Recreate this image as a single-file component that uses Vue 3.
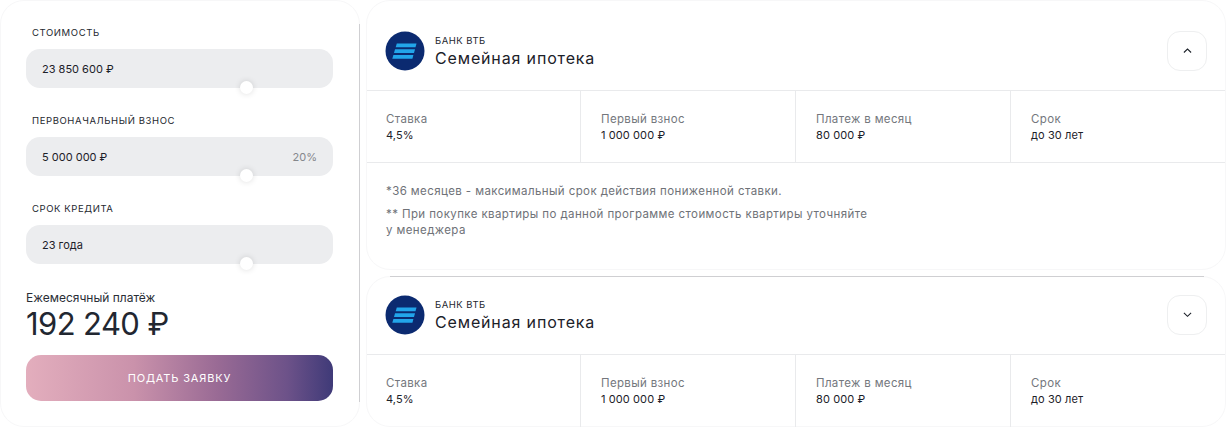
<script setup>
const fields = [
  { label: 'Стоимость', value: '23 850 600 ₽', extra: '' },
  { label: 'Первоначальный взнос', value: '5 000 000 ₽', extra: '20%' },
  { label: 'Срок кредита', value: '23 года', extra: '' },
]
const stats = [
  { label: 'Ставка', value: '4,5%' },
  { label: 'Первый взнос', value: '1 000 000 ₽' },
  { label: 'Платеж в месяц', value: '80 000 ₽' },
  { label: 'Срок', value: 'до 30 лет' },
]
const cards = [
  { open: true },
  { open: false },
]
</script>

<template>
  <div class="page">
    <aside class="panel">
      <div v-for="f in fields" :key="f.label" class="field">
        <div class="field-label">{{ f.label }}</div>
        <div class="input">
          <span class="input-value">{{ f.value }}</span>
          <span v-if="f.extra" class="input-extra">{{ f.extra }}</span>
          <span class="thumb"></span>
        </div>
      </div>
      <div class="total-label">Ежемесячный платёж</div>
      <div class="total">192 240 ₽</div>
      <button class="submit">Подать заявку</button>
    </aside>
    <main class="list">
      <section v-for="(c, i) in cards" :key="i" class="card" :class="i > 0 ? 'card-next' : 'card-first'">
        <header class="head">
          <svg class="logo" viewBox="0 0 40 40" width="40" height="40">
            <circle cx="20" cy="20" r="19.5" fill="#0b2a70" />
            <path d="M11.8 12.4H31.5L30.5 16.2H10.7Z" fill="#22a5ea" />
            <path d="M10 18.2H30L29 22H9Z" fill="#22a5ea" />
            <path d="M8.4 23.9H28.4L27.4 27.7H7.3Z" fill="#22a5ea" />
          </svg>
          <div class="titles">
            <div class="bank">Банк ВТБ</div>
            <div class="title">Семейная ипотека</div>
          </div>
          <button class="toggle" :aria-label="c.open ? 'Свернуть' : 'Развернуть'">
            <svg viewBox="0 0 10 6" width="9" height="5.4" fill="none">
              <path v-if="c.open" d="M1 5L5 1.2L9 5" stroke="#1c2129" stroke-width="1.2" />
              <path v-else d="M1 1L5 4.8L9 1" stroke="#1c2129" stroke-width="1.2" />
            </svg>
          </button>
        </header>
        <div class="stats">
          <div v-for="s in stats" :key="s.label" class="stat">
            <div class="stat-label">{{ s.label }}</div>
            <div class="stat-value">{{ s.value }}</div>
          </div>
        </div>
        <div v-if="c.open" class="notes">
          <p>*36 месяцев - максимальный срок действия пониженной ставки.</p>
          <p>** При покупке квартиры по данной программе стоимость квартиры уточняйте<br>у менеджера</p>
        </div>
      </section>
    </main>
  </div>
</template>

<style>
html, body { margin: 0; background: #fff; overflow: hidden; }
</style>

<style scoped>
.page {
  width: 1226px;
  height: 427px;
  display: flex;
  gap: 6px;
  overflow: hidden;
  background: #fff;
  font-family: Inter, "Noto Sans", sans-serif;
  color: #1c2129;
}
.panel {
  position: relative;
  box-sizing: border-box;
  width: 360px;
  height: 427px;
  flex: none;
  padding: 24px 25px 0;
  border-radius: 24px;
  border: 1px solid #f7f7f8;
}
.panel::after {
  content: '';
  position: absolute;
  right: -1px;
  top: 23px;
  bottom: 24px;
  width: 1px;
  background: #cfcfd2;
}
.field { margin-bottom: 25px; }
.field-label {
  margin-left: 6px;
  height: 14px;
  font-size: 9.5px;
  line-height: 16px;
  letter-spacing: 0.6px;
  text-transform: uppercase;
  color: #24282f;
}
.input {
  position: relative;
  display: flex;
  justify-content: space-between;
  align-items: center;
  box-sizing: border-box;
  width: 307px;
  height: 39px;
  margin-top: 10px;
  padding: 0 16px;
  border-radius: 14px;
  background: #ecedef;
  font-size: 11px;
}
.input-value { color: #1c2129; }
.input-extra { color: #85878c; }
.thumb {
  position: absolute;
  left: 214px;
  top: 32px;
  width: 13px;
  height: 13px;
  border-radius: 50%;
  background: #fff;
  box-shadow: 0 0 6px rgba(0, 0, 0, 0.14);
}
.total-label {
  padding-top: 1px;
  font-size: 12px;
  line-height: 16px;
  color: #2a2e36;
}
.total {
  font-size: 31px;
  line-height: 34px;
  letter-spacing: -0.6px;
  color: #222731;
  margin-top: 1px;
}
.submit {
  display: block;
  width: 307px;
  height: 46px;
  margin-top: 14px;
  border: 0;
  border-radius: 15px;
  background: linear-gradient(90deg, #e3aebd 0%, #ca92ab 35%, #9a6b95 62%, #6d5289 85%, #3f3a78 100%);
  color: #fff;
  font: inherit;
  font-size: 11px;
  letter-spacing: 0.85px;
  text-transform: uppercase;
}
.list { flex: 1; min-width: 0; display: flex; flex-direction: column; gap: 6px; }
.card {
  flex: none;
  box-sizing: border-box;
  width: 860px;
  border-radius: 24px;
  border: 1px solid #f7f7f8;
  position: relative;
}
.card-first { height: 270px; padding-top: 11px; }
.card-next { height: 151px; }
.card-next .head { margin-top: -1px; }
.card-next::before {
  content: '';
  position: absolute;
  left: 23px;
  right: 21px;
  top: -1px;
  height: 1px;
  background: #cfcfd2;
}
.head {
  display: flex;
  align-items: center;
  gap: 10px;
  height: 79px;
  box-sizing: border-box;
  padding: 0 18px 0 18px;
  border-bottom: 1px solid #e9eaec;
}
.logo { flex: none; }
.titles { flex: 1; }
.bank {
  font-size: 9.5px;
  line-height: 13px;
  letter-spacing: 0.5px;
  text-transform: uppercase;
  color: #24282f;
}
.title {
  font-size: 16px;
  line-height: 22px;
  letter-spacing: 0.85px;
  color: #1c2129;
}
.toggle {
  flex: none;
  display: flex;
  align-items: center;
  justify-content: center;
  width: 40px;
  height: 40px;
  padding: 0;
  border: 1px solid #eeeff0;
  border-radius: 13px;
  background: #fff;
}
.stats {
  display: grid;
  grid-template-columns: 213px 215px 215px 1fr;
  height: 72px;
  box-sizing: border-box;
  border-bottom: 1px solid #e9eaec;
}
.card-next .stats { border-bottom: 0; }
.stat {
  box-sizing: border-box;
  padding: 20px 0 0 20px;
  border-left: 1px solid #e9eaec;
}
.stat:first-child { border-left: 0; padding-left: 19px; }
.stat-label {
  font-size: 11.5px;
  line-height: 16px;
  letter-spacing: 0.35px;
  color: #74777d;
}
.stat-value {
  font-size: 11px;
  line-height: 16px;
  letter-spacing: 0.1px;
  color: #1c2129;
}
.notes {
  padding: 20px 19px 0;
  font-size: 11.5px;
  line-height: 16px;
  letter-spacing: 0.4px;
  color: #6f7278;
}
.notes p { margin: 0 0 7px; }
</style>
